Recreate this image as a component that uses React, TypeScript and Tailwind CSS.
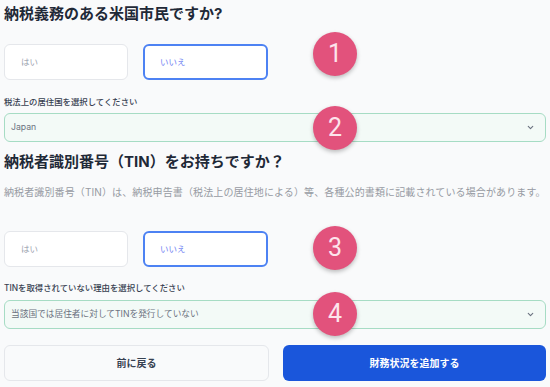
import React from 'react';

const font = { fontFamily: 'Inter, "Noto Sans CJK JP", "Noto Sans", sans-serif' };

function Chevron() {
  return (
    <svg width="9" height="9" viewBox="0 0 24 24" fill="none" stroke="#6b7280" strokeWidth="3" strokeLinecap="round" strokeLinejoin="round">
      <path d="M6 9l6 6 6-6" />
    </svg>
  );
}

function YesNo() {
  return (
    <div className="flex gap-[15px]">
      <button className="w-[124px] h-[36px] rounded-md border border-[#e5e7eb] bg-white text-left pl-[16px] text-[8.5px] text-[#9ca3af]">
        はい
      </button>
      <button className="w-[125px] h-[36px] rounded-md border-2 border-[#4d82f3] bg-white text-left pl-[15px] text-[8.5px] text-[#6f7ff3]">
        いいえ
      </button>
    </div>
  );
}

function Select({ value }: { value: string }) {
  return (
    <div className="h-[29px] rounded-md border-[1.5px] border-[#a6dcc4] bg-[#f3faf7] flex items-center justify-between pl-[6px] pr-[10px]">
      <span className="text-[8.7px] text-[#6b7280]">{value}</span>
      <Chevron />
    </div>
  );
}

function Marker({ n, top }: { n: number; top: number }) {
  return (
    <div
      className="absolute left-[313px] w-[44px] h-[44px] rounded-full bg-[#e2527c] shadow-[0_2px_4px_rgba(0,0,0,0.25)] flex items-center justify-center text-[25px] text-[#fde4ec]"
      style={{ top, fontFamily: 'Roboto, "Noto Sans", sans-serif' }}
    >
      {n}
    </div>
  );
}

export default function App() {
  return (
    <div className="relative w-[550px] h-[387px] overflow-hidden bg-[#f9fafb] px-[4px]" style={font}>
      <h2 className="h-[28px] leading-[28px] text-[15px] font-bold text-[#1f2937]">納税義務のある米国市民ですか?</h2>
      <div className="mt-[16px]">
        <YesNo />
      </div>
      <p className="mt-[15px] h-[14px] leading-[14px] text-[8.4px] font-medium text-[#374151]">税法上の居住国を選択してください</p>
      <div className="mt-[4px]">
        <Select value="Japan" />
      </div>
      <h2 className="mt-[6px] h-[28px] leading-[28px] text-[15px] font-bold text-[#1f2937]">納税者識別番号（TIN）をお持ちですか？</h2>
      <p className="mt-[8px] h-[16px] leading-[16px] text-[10px] tracking-[0.12px] whitespace-nowrap text-[#979ba3]">
        納税者識別番号（TIN）は、納税申告書（税法上の居住地による）等、各種公的書類に記載されている場合があります。
      </p>
      <div className="mt-[31px]">
        <YesNo />
      </div>
      <p className="mt-[14px] h-[14px] leading-[14px] text-[8.4px] font-medium text-[#374151]">TINを取得されていない理由を選択してください</p>
      <div className="mt-[5px]">
        <Select value="当該国では居住者に対してTINを発行していない" />
      </div>
      <div className="mt-[16px] flex gap-[14px]">
        <button className="flex-1 h-[36px] rounded-md border border-[#e5e7eb] bg-[#f9fafb] text-[10px] font-semibold text-[#374151]">
          前に戻る
        </button>
        <button className="flex-1 h-[36px] rounded-md bg-[#1a56db] text-[10px] font-semibold text-white">
          財務状況を追加する
        </button>
      </div>
      <Marker n={1} top={32} />
      <Marker n={2} top={106} />
      <Marker n={3} top={226} />
      <Marker n={4} top={292} />
    </div>
  );
}
